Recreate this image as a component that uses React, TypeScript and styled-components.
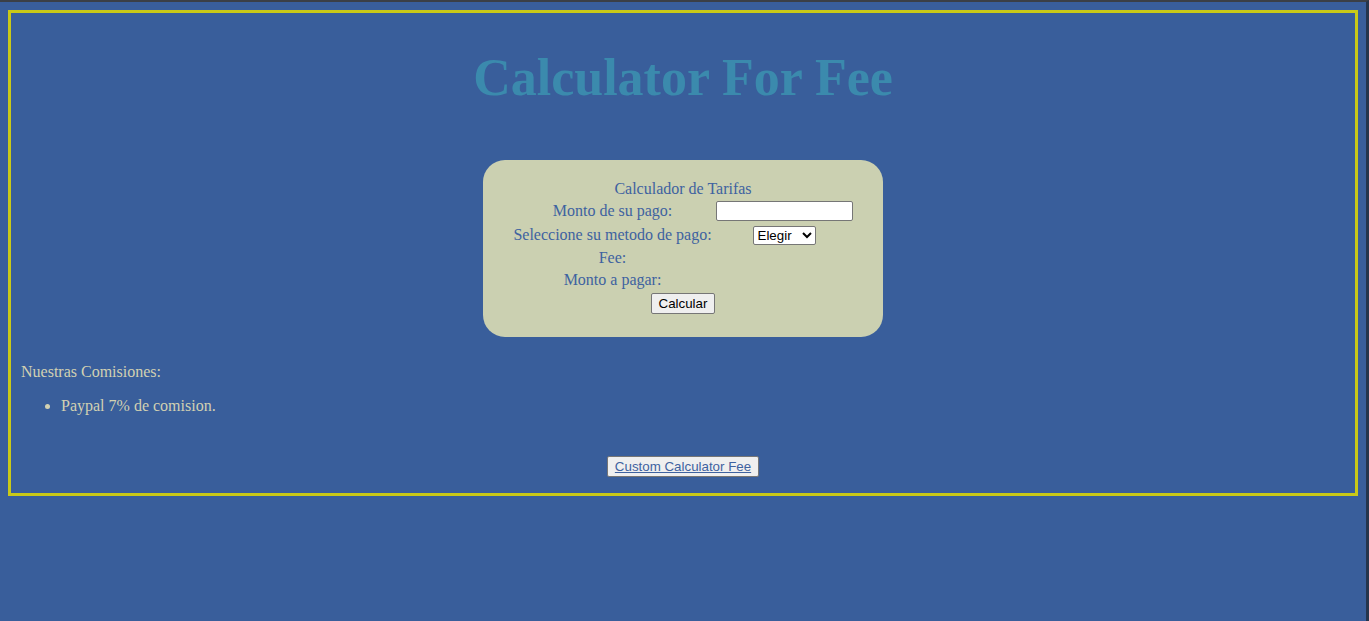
import React from "react";
import styled, { createGlobalStyle } from "styled-components";

const Global = createGlobalStyle`
  html {
    background: #395e9b;
    border-top: 2px solid #3b3f46;
    border-right: 3px solid #25354d;
    min-height: 100vh;
    box-sizing: border-box;
  }
  body {
    margin: 8px;
    background: #395e9b;
    font-family: "Liberation Serif", "Times New Roman", serif;
    font-size: 16px;
  }
`;

const Frame = styled.div`
  border: 3px solid #c9c918;
  padding: 0 10px 16px;
`;

const Title = styled.h1`
  margin: 35px 0 52px;
  text-align: center;
  font-size: 52px;
  line-height: 60px;
  font-weight: bold;
  color: #3b8aad;
`;

const Card = styled.div`
  width: 400px;
  height: 177px;
  box-sizing: border-box;
  margin: 0 auto;
  padding: 20px 0 0;
  background: #cbd0b1;
  border-radius: 22px;
  color: #3e62a0;
  display: flex;
  flex-direction: column;
  align-items: center;
`;

const Table = styled.table`
  border-spacing: 2px;
  color: #3e62a0;
  font-size: 16px;
`;

const Caption = styled.caption`
  line-height: 18px;
  padding-bottom: 0;
`;

const Label = styled.td`
  text-align: center;
  white-space: nowrap;
  padding: 1px 2px 1px 0;
  width: 200px;
  line-height: 18px;
`;

const Field = styled.td`
  text-align: center;
  white-space: nowrap;
  padding: 1px 1px;
`;

const TextInput = styled.input`
  width: 137px;
  height: 20px;
  box-sizing: border-box;
  border: 1px solid #767676;
  border-radius: 2px;
  background: #fff;
  padding: 1px 2px;
  vertical-align: middle;
  margin-left: -2px;
`;

const Select = styled.select`
  width: 63px;
  height: 19px;
  box-sizing: border-box;
  font-family: "Liberation Sans", Arial, sans-serif;
  font-size: 13.33px;
  color: #000;
  border: 1px solid #767676;
  border-radius: 2px;
  background: #fff;
  padding: 0;
  vertical-align: middle;
  margin-left: -2px;
`;

const Button = styled.button<{ $link?: boolean }>`
  font-family: "Liberation Sans", Arial, sans-serif;
  font-size: 13.33px;
  height: 21px;
  padding: 1px 7px;
  box-sizing: border-box;
  background: #efefef;
  border: 1px solid #767676;
  border-radius: 2px;
  color: ${(p) => (p.$link ? "#3e62a0" : "#000")};
  text-decoration: ${(p) => (p.$link ? "underline" : "none")};
  line-height: 17px;
`;

const Info = styled.p`
  margin: 25px 0 0;
  color: #d2d1b2;
  line-height: 20px;
`;

const List = styled.ul`
  margin: 14px 0 0;
  padding-left: 40px;
  color: #d2d1b2;
  line-height: 20px;
`;

const Footer = styled.div`
  display: flex;
  justify-content: center;
  margin-top: 40px;
`;

export default function App() {
  return (
    <>
      <Global />
      <Frame>
        <Title>Calculator For Fee</Title>
        <Card>
          <Table>
            <Caption>Calculador de Tarifas</Caption>
            <tbody>
              <tr>
                <Label>Monto de su pago:</Label>
                <Field>
                  <TextInput type="text" />
                </Field>
              </tr>
              <tr>
                <Label>Seleccione su metodo de pago:</Label>
                <Field>
                  <Select defaultValue="">
                    <option value="">Elegir</option>
                    <option value="paypal">Paypal</option>
                  </Select>
                </Field>
              </tr>
              <tr>
                <Label>Fee:</Label>
                <Field />
              </tr>
              <tr>
                <Label>Monto a pagar:</Label>
                <Field />
              </tr>
              <tr>
                <Field colSpan={2}>
                  <Button>Calcular</Button>
                </Field>
              </tr>
            </tbody>
          </Table>
        </Card>
        <Info>Nuestras Comisiones:</Info>
        <List>
          <li>Paypal 7% de comision.</li>
        </List>
        <Footer>
          <Button $link>Custom Calculator Fee</Button>
        </Footer>
      </Frame>
    </>
  );
}
